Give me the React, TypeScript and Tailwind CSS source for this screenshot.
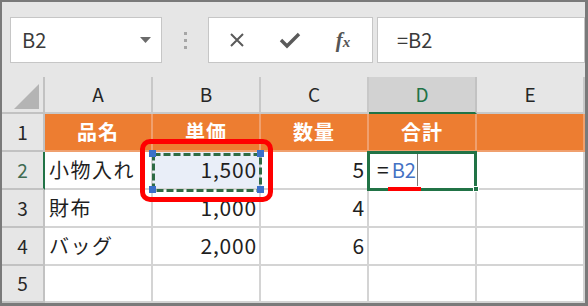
import React from "react";

const cols = ["A", "B", "C", "D", "E"];

const rows = [
  { n: "1", cells: ["品名", "単価", "数量", "合計", ""], head: true },
  { n: "2", cells: ["小物入れ", "1,500", "5", "", ""] },
  { n: "3", cells: ["財布", "1,000", "4", "", ""] },
  { n: "4", cells: ["バッグ", "2,000", "6", "", ""] },
  { n: "5", cells: ["", "", "", "", ""] },
];

const gridCols = "grid grid-cols-[43px_108px_108px_108px_108px_1fr]";

function NameBox() {
  return (
    <div className="w-[152px] h-[46px] bg-white border border-[#c6c6c6] flex items-center justify-between pl-[11px] pr-[10px]">
      <span className="text-[20px] text-[#3a3a3a]">B2</span>
      <svg width="11" height="7" viewBox="0 0 11 7">
        <path d="M0 0 L11 0 L5.5 6 Z" fill="#6b6b6b" />
      </svg>
    </div>
  );
}

function FormulaButtons() {
  return (
    <div className="w-[165px] h-[46px] bg-white border border-[#c6c6c6] flex items-center">
      <div className="w-[56px] flex justify-center">
        <svg width="16" height="16" viewBox="0 0 16 16">
          <path d="M2 2 L14 14 M14 2 L2 14" stroke="#5a5a5a" strokeWidth="2" />
        </svg>
      </div>
      <div className="w-[50px] flex justify-center">
        <svg width="22" height="18" viewBox="0 0 22 18">
          <path d="M2 9 L8 15 L20 3" stroke="#5a5a5a" strokeWidth="3.4" fill="none" />
        </svg>
      </div>
      <div className="w-[56px] flex justify-center items-baseline font-['Liberation_Serif',serif] italic font-bold text-[#555]">
        <span className="text-[21px] leading-none">f</span>
        <span className="text-[15px] leading-none">x</span>
      </div>
    </div>
  );
}

function Cell({
  text,
  col,
  row,
}: {
  text: string;
  col: number;
  row: number;
}) {
  const head = row === 0;
  const numeric = col > 0 && !head && !(row === 1 && col === 3);
  let cls = "h-full border-r-2 border-b-2 flex items-center relative ";
  if (head) {
    cls +=
      "bg-[#ed7d31] border-[#f0a06e] justify-center text-white font-bold text-[20px] tracking-[1px]";
  } else {
    cls += "border-[#d4d4d4] text-[#1f1f1f] ";
    cls += row === 1 && col === 1 ? "bg-[#e9eef8] " : "bg-white ";
    cls += numeric
      ? "justify-end pr-[2px] text-[21px] tracking-[0.8px]"
      : "pl-[4px] text-[20px] tracking-[1.5px]";
  }
  return (
    <div className={cls}>
      {row === 1 && col === 3 ? (
        <span className="flex items-center pl-[4px] tracking-normal">
          <span className="text-[#1f1f1f] text-[21px]">=</span>
          <span className="text-[#4472c4] ml-[3px]">B2</span>
          <span className="w-px h-[32px] bg-[#7a7a7a] ml-px" />
        </span>
      ) : (
        <span>{text}</span>
      )}
      {row === 1 && col === 1 && <CopySelection />}
      {row === 1 && col === 3 && <ActiveCell />}
    </div>
  );
}

function CopySelection() {
  const corner = "absolute z-20 w-[7px] h-[7px] bg-[#3b70c9]";
  return (
    <>
      <div className="absolute z-20 left-[-13px] top-[-13px] w-[133px] h-[63px] border-[5px] border-[#ff0000] rounded-[10px] pointer-events-none" />
      <svg
        className="absolute z-20 left-[-1px] top-[1px] pointer-events-none"
        width="110"
        height="39"
        viewBox="0 0 110 39"
      >
        <rect
          x="1.5"
          y="1.5"
          width="107"
          height="36"
          fill="none"
          stroke="#2e6b44"
          strokeWidth="3"
          strokeDasharray="7 3"
        />
      </svg>
      <div className={corner + " left-[-4px] top-[-2px]"} />
      <div className={corner + " right-[-5px] top-[-2px]"} />
      <div className={corner + " left-[-4px] bottom-[-5px]"} />
      <div className={corner + " right-[-5px] bottom-[-5px]"} />
    </>
  );
}

function ActiveCell() {
  return (
    <>
      <div className="absolute z-20 left-[-2px] top-[-1px] w-[110px] h-[40px] border-[3px] border-[#217346] pointer-events-none" />
      <div className="absolute z-20 right-[-4px] bottom-[-4px] w-[6px] h-[6px] bg-[#217346] border border-white" />
      <div className="absolute z-20 left-[19px] bottom-[-3px] w-[33px] h-[4px] bg-[#ff0000]" />
    </>
  );
}

export default function App() {
  return (
    <div className="w-[588px] h-[306px] bg-[#e6e6e6] border-t-2 border-l-2 border-r-[3px] border-b-[3px] border-[#7a7a7a] flex flex-col font-['Noto_Sans_CJK_JP','Noto_Sans',sans-serif] overflow-hidden">
      {/* Formula bar */}
      <div className="h-[75px] flex items-start pt-[15px] pl-[8px] shrink-0">
        <NameBox />
        <div className="w-[46px] h-[46px] flex flex-col items-center justify-center gap-[4px]">
          <div className="w-[3px] h-[3px] bg-[#a6a6a6]" />
          <div className="w-[3px] h-[3px] bg-[#a6a6a6]" />
          <div className="w-[3px] h-[3px] bg-[#a6a6a6]" />
        </div>
        <FormulaButtons />
        <div className="ml-[4px] flex-1 h-[46px] bg-white border border-[#c6c6c6] flex items-center pl-[19px]">
          <span className="text-[20px] text-[#3a3a3a]">=B2</span>
        </div>
      </div>

      {/* Column headers */}
      <div className={gridCols + " h-[37px] shrink-0"}>
        <div className="border-r-2 border-b-2 border-[#c2c2c2] relative">
          <svg className="absolute right-[4px] bottom-[3px]" width="25" height="25" viewBox="0 0 25 25">
            <path d="M25 0 L25 25 L0 25 Z" fill="#b4b4b4" />
          </svg>
        </div>
        {cols.map((c) =>
          c === "D" ? (
            <div
              key={c}
              className="bg-[#d2d2d2] border-r-2 border-[#c2c2c2] border-b-2 border-b-[#217346] flex items-center justify-center text-[19px] text-[#217346]"
            >
              {c}
            </div>
          ) : (
            <div
              key={c}
              className="border-r-2 border-b-2 border-[#c8c8c8] flex items-center justify-center text-[19px] text-[#262626]"
            >
              {c}
            </div>
          )
        )}
      </div>

      {/* Rows */}
      {rows.map((r, ri) => (
        <div key={r.n} className={gridCols + (ri === 4 ? " h-[37px]" : " h-[38px]") + " shrink-0"}>
          <div
            className={
              "border-b-2 border-[#c2c2c2] flex items-center justify-center text-[19px] " +
              (ri === 1
                ? "border-r-2 border-r-[#217346] text-[#3f6b52]"
                : "border-r-2 text-[#262626]")
            }
          >
            {r.n}
          </div>
          {r.cells.map((t, ci) => (
            <Cell key={ci} text={t} col={ci} row={ri} />
          ))}
        </div>
      ))}
    </div>
  );
}
